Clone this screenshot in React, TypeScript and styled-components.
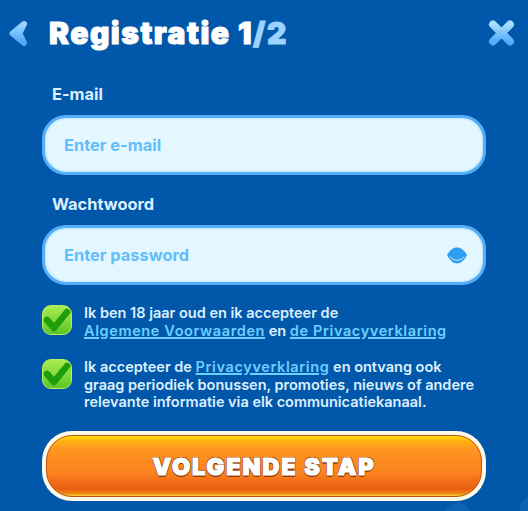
import React from "react";
import styled, { createGlobalStyle } from "styled-components";

const Global = createGlobalStyle`
  html, body {
    margin: 0;
    padding: 0;
    background: #0158ab;
    overflow: hidden;
  }
  * {
    box-sizing: border-box;
  }
`;

const Page = styled.div`
  position: relative;
  width: 528px;
  height: 511px;
  overflow: hidden;
  background: #0158ab;
  font-family: Inter, "Noto Sans", sans-serif;
  padding: 19px 13px 0 9px;
`;

const Header = styled.div`
  display: flex;
  align-items: center;
  height: 28px;
  margin-bottom: 38px;
`;

const IconBtn = styled.div`
  flex: none;
  height: 28px;
  display: flex;
  align-items: center;
`;

const Title = styled.h1`
  flex: 1;
  margin: 0 0 0 20px;
  font-size: 30px;
  line-height: 28px;
  font-weight: 900;
  letter-spacing: 1.5px;
  white-space: nowrap;
  color: #fff;
  -webkit-text-stroke: 1px #fff;
  span {
    color: #9bd3ff;
    -webkit-text-stroke: 1px #9bd3ff;
  }
`;

const Form = styled.div`
  display: flex;
  flex-direction: column;
  padding-left: 33px;
  width: 477px;
`;

const Label = styled.div`
  margin: 0 0 11px 10px;
  font-size: 16.4px;
  line-height: 19px;
  font-weight: 700;
  color: #dcefff;
`;

const Field = styled.div`
  display: flex;
  align-items: center;
  justify-content: space-between;
  height: 60px;
  padding: 0 16px 0 19px;
  margin-bottom: 20px;
  border-radius: 24px;
  background: #e4f7ff;
  border: 3px solid #54aef5;
  box-shadow: inset 0 0 3px #8fcfff;
  font-size: 16.4px;
  font-weight: 700;
  color: #62bdfb;
`;

const Consent = styled.div<{ $gap: number }>`
  display: flex;
  gap: 12px;
  margin-bottom: ${(p) => p.$gap}px;
`;

const CheckBox = styled.div`
  flex: none;
  width: 30px;
  height: 30px;
  border-radius: 9px;
  border: 1px solid #b6f05d;
  background: linear-gradient(180deg, #a8ec52 0%, #7fd93a 55%, #5cc425 100%);
  display: flex;
  align-items: center;
  justify-content: center;
`;

const ConsentText = styled.div`
  margin: -1px 0 1px;
  font-size: 14.5px;
  line-height: 17.5px;
  font-weight: 600;
  white-space: nowrap;
  color: #dcefff;
  a {
    color: #6ccfff;
    letter-spacing: 0.62px;
    text-decoration: underline;
    text-decoration-thickness: 1.5px;
  }
`;

const Submit = styled.div`
  height: 70px;
  border-radius: 30px;
  padding: 4px;
  background: #fff8e4;
`;

const SubmitInner = styled.div`
  height: 100%;
  padding-top: 1px;
  border-radius: 26px;
  border: 1px solid #b65412;
  background: linear-gradient(180deg, #ffdf00 0%, #ffb40f 8%, #ff9420 22%, #fb831e 62%, #e85c10 88%, #f08a12 96%, #ffd23c 100%);
  display: flex;
  align-items: center;
  justify-content: center;
  font-size: 23.5px;
  font-weight: 900;
  letter-spacing: 1.9px;
  color: #fff;
  -webkit-text-stroke: 1.2px #fff;
  text-shadow: -1px -1px 0 #8e3a0c, 1px -1px 0 #8e3a0c, -1px 1px 0 #8e3a0c, 1px 1px 0 #8e3a0c, 0 2px 0 #8e3a0c;
`;

const Bubble = styled.div<{ $x: number; $y: number; $r: number }>`
  position: absolute;
  left: ${(p) => p.$x}px;
  top: ${(p) => p.$y}px;
  width: ${(p) => p.$r}px;
  height: ${(p) => p.$r}px;
  border-radius: 50%;
  background: rgba(150, 205, 250, 0.09);
`;

const Back = () => (
  <svg width="20" height="27" viewBox="0 0 20 27">
    <defs>
      <linearGradient id="bk" x1="0" y1="0" x2="0" y2="1">
        <stop offset="0" stopColor="#9bd6ff" />
        <stop offset="1" stopColor="#4aa6f6" />
      </linearGradient>
    </defs>
    <path d="M15 5 L3.500 14.500 L15 24 L10.500 14.500 Z" fill="#0a4589" fillOpacity=".5" stroke="#0a4589" strokeOpacity=".5" strokeWidth="6" strokeLinejoin="round" />
    <path d="M15 4 L3.500 13.500 L15 23 L10.500 13.500 Z" fill="url(#bk)" stroke="url(#bk)" strokeWidth="6" strokeLinejoin="round" />
  </svg>
);

const Close = () => (
  <svg width="27" height="27" viewBox="0 0 27 27">
    <defs>
      <linearGradient id="cl" x1="0" y1="0" x2="0" y2="1">
        <stop offset="0" stopColor="#a5dcff" />
        <stop offset="1" stopColor="#52acf8" />
      </linearGradient>
    </defs>
    <path d="M5 5.500 L22 22.500 M22 5.500 L5 22.500" stroke="#0a4589" strokeOpacity=".5" strokeWidth="8" strokeLinecap="round" />
    <path d="M5 4.500 L22 21.500 M22 4.500 L5 21.500" stroke="url(#cl)" strokeWidth="8" strokeLinecap="round" />
  </svg>
);

const Eye = () => (
  <svg width="20" height="17" viewBox="0 0 20 17">
    <path d="M0 8 C3 3 6 0.500 10 0.500 C14 0.500 17 3 20 8 C17 13.500 14 16.500 10 16.500 C6 16.500 3 13.500 0 8 Z" fill="#2f9df2" />
    <path d="M3 9.500 C6 14.500 14 14.500 17 9.500" fill="none" stroke="#bfe8ff" strokeWidth="1" />
  </svg>
);

const Tick = () => (
  <svg width="28" height="26" viewBox="0 0 28 26">
    <path d="M4 13 L11 21 L24 5" fill="none" stroke="#1f9e0c" strokeWidth="6.500" strokeLinecap="round" strokeLinejoin="round" />
  </svg>
);

export default function App() {
  return (
    <Page>
      <Global />
      <Header>
        <IconBtn>
          <Back />
        </IconBtn>
        <Title>
          Registratie 1<span>/2</span>
        </Title>
        <IconBtn>
          <Close />
        </IconBtn>
      </Header>
      <Form>
        <Label>E-mail</Label>
        <Field>Enter e-mail</Field>
        <Label>Wachtwoord</Label>
        <Field>
          Enter password
          <Eye />
        </Field>
        <Consent $gap={19}>
          <CheckBox>
            <Tick />
          </CheckBox>
          <ConsentText>
            Ik ben 18 jaar oud en ik accepteer de
            <br />
            <a>Algemene Voorwaarden</a> en <a>de Privacyverklaring</a>
          </ConsentText>
        </Consent>
        <Consent $gap={19.5}>
          <CheckBox>
            <Tick />
          </CheckBox>
          <ConsentText>
            Ik accepteer de <a>Privacyverklaring</a> en ontvang ook
            <br />
            graag periodiek bonussen, promoties, nieuws of andere
            <br />
            relevante informatie via elk communicatiekanaal.
          </ConsentText>
        </Consent>
        <Submit>
          <SubmitInner>VOLGENDE STAP</SubmitInner>
        </Submit>
      </Form>
      <Bubble $x={445} $y={503} $r={26} />
      <Bubble $x={520} $y={495} $r={30} />
    </Page>
  );
}
